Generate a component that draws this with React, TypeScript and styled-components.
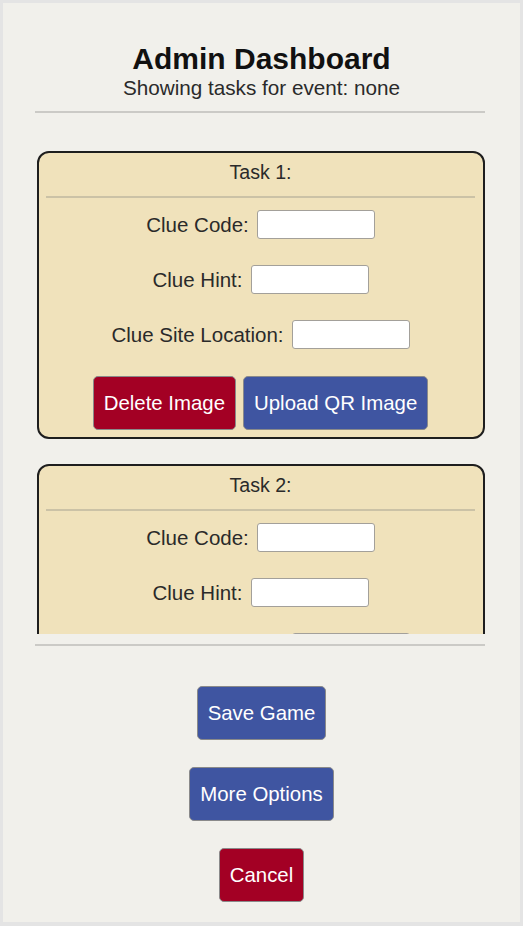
import React from "react";
import styled, { createGlobalStyle } from "styled-components";

const Global = createGlobalStyle`
  html, body { margin: 0; padding: 0; background: #e4e4e4; }
  body { font-family: "Liberation Sans", Arial, sans-serif; }
  * { box-sizing: border-box; }
`;

const Frame = styled.div`
  margin: 3px 3px 4px 3px;
  height: 919px;
  background: #f1f0eb;
  display: flex;
  flex-direction: column;
  align-items: center;
  overflow: hidden;
`;

const Title = styled.h1`
  margin: 39px 0 0;
  font-size: 30px;
  font-weight: 700;
  color: #111;
  line-height: 34px;
`;

const Subtitle = styled.div`
  margin-top: 0;
  font-size: 20.7px;
  line-height: 24px;
  color: #2a2a2a;
`;

const Rule = styled.div<{ $top: number }>`
  width: 450px;
  height: 2px;
  background: #cbcac6;
  margin-top: ${(p) => p.$top}px;
  margin-left: -3px;
  flex-shrink: 0;
`;

const TaskList = styled.div`
  width: 450px;
  height: 521px;
  margin-left: -3px;
  overflow: hidden;
  padding: 38px 0 0 2px;
  display: flex;
  flex-direction: column;
  gap: 25px;
  flex-shrink: 0;
`;

const Card = styled.div`
  width: 448px;
  border: 2px solid #1e1e1e;
  border-radius: 12px;
  background: #f0e2bb;
  padding: 8px 8px 7px 7px;
  display: flex;
  flex-direction: column;
  align-items: stretch;
  flex-shrink: 0;
`;

const TaskTitle = styled.div`
  text-align: center;
  font-size: 19.6px;
  line-height: 23px;
  color: #2a2a2a;
`;

const InnerRule = styled.div`
  height: 2px;
  background: #cbc2a6;
  margin: 12px 0 12px;
`;

const Fields = styled.div`
  display: flex;
  flex-direction: column;
  gap: 26px;
`;

const Row = styled.label`
  display: flex;
  justify-content: center;
  align-items: center;
  gap: 8px;
  font-size: 20.5px;
  color: #2a2a2a;
  height: 29px;
`;

const Input = styled.input`
  width: 118px;
  height: 29px;
  border: 1px solid #a3a09a;
  border-radius: 3px;
  background: #fff;
  padding: 0 4px;
  font-size: 16px;
`;

const ButtonRow = styled.div`
  display: flex;
  justify-content: center;
  gap: 7px;
  margin-top: 27px;
`;

const Button = styled.button<{ $variant: "red" | "blue" }>`
  height: 54px;
  padding: 0 10px;
  border: 1px solid #8a8a8a;
  border-radius: 5px;
  background: ${(p) => (p.$variant === "red" ? "#a30024" : "#3f55a1")};
  color: #fff;
  font-family: "Liberation Sans", Arial, sans-serif;
  font-size: 20.4px;
  cursor: pointer;
`;

const Actions = styled.div`
  display: flex;
  flex-direction: column;
  align-items: center;
  gap: 27px;
  margin-top: 40px;
`;

const tasks = [1, 2];

export default function App() {
  return (
    <>
      <Global />
      <Frame>
        <Title>Admin Dashboard</Title>
        <Subtitle>Showing tasks for event: none</Subtitle>
        <Rule $top={11} />
        <TaskList>
          {tasks.map((n) => (
            <Card key={n}>
              <TaskTitle>Task {n}:</TaskTitle>
              <InnerRule />
              <Fields>
                <Row>
                  Clue Code: <Input />
                </Row>
                <Row>
                  Clue Hint: <Input />
                </Row>
                <Row>
                  Clue Site Location: <Input />
                </Row>
              </Fields>
              <ButtonRow>
                <Button $variant="red">Delete Image</Button>
                <Button $variant="blue">Upload QR Image</Button>
              </ButtonRow>
            </Card>
          ))}
        </TaskList>
        <Rule $top={10} />
        <Actions>
          <Button $variant="blue">Save Game</Button>
          <Button $variant="blue">More Options</Button>
          <Button $variant="red">Cancel</Button>
        </Actions>
      </Frame>
    </>
  );
}
